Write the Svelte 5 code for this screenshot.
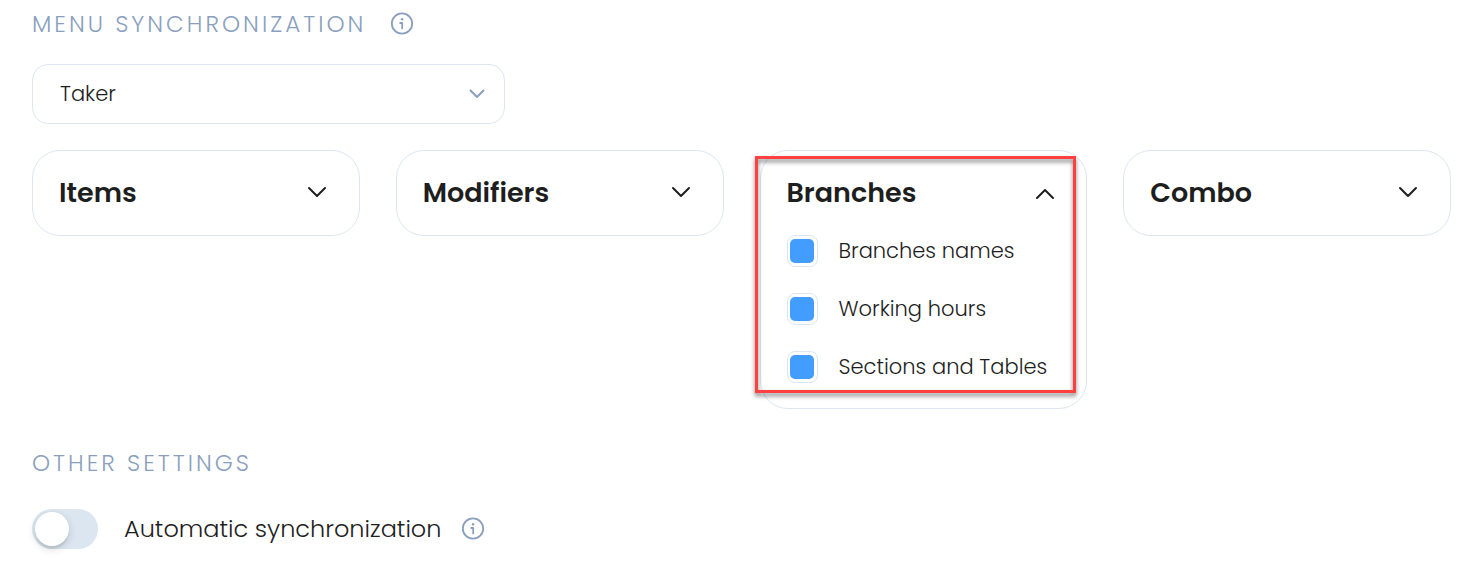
<script>
  let source = $state('Taker');
  let automatic = $state(false);
  let groups = $state([
    { name: 'Items', open: false, options: [] },
    { name: 'Modifiers', open: false, options: [] },
    {
      name: 'Branches',
      open: true,
      marked: true,
      options: [
        { label: 'Branches names', checked: true },
        { label: 'Working hours', checked: true },
        { label: 'Sections and Tables', checked: true }
      ]
    },
    { name: 'Combo', open: false, options: [] }
  ]);
</script>

{#snippet info(label)}
  <button class="info" type="button" aria-label={label}>
    <svg viewBox="0 0 24 24" width="24" height="24" fill="none" stroke="currentColor" stroke-width="1.8" stroke-linecap="round" stroke-linejoin="round">
      <circle cx="12" cy="11.5" r="10.2" />
      <path d="M10.2 11H12.2V16.4" />
      <circle cx="12.1" cy="7.2" r="1.2" fill="currentColor" stroke="none" />
    </svg>
  </button>
{/snippet}

<main>
  <section>
    <header>
      <h2>MENU SYNCHRONIZATION</h2>
      {@render info('About menu synchronization')}
    </header>

    <div class="picker">
      <select aria-label="Menu source" bind:value={source}>
        <option>Taker</option>
      </select>
      <svg viewBox="0 0 16 10" width="16" height="10" fill="none" stroke="currentColor" stroke-width="2" stroke-linecap="round" stroke-linejoin="round">
        <path d="M1.5 1.5 8 8l6.5-6.5" />
      </svg>
    </div>

    <div class="groups">
      {#each groups as group}
        <article class="card" class:open={group.open}>
          <button class="toggle" type="button" aria-expanded={group.open} onclick={() => (group.open = !group.open)}>
            <span>{group.name}</span>
            <svg viewBox="0 0 20 14" width="20" height="14" fill="none" stroke="currentColor" stroke-width="2" stroke-linecap="round" stroke-linejoin="round">
              <path d="M2 2l8 8 8-8" />
            </svg>
          </button>
          {#if group.open && group.options.length}
            <ul>
              {#each group.options as option}
                <li>
                  <label>
                    <input type="checkbox" bind:checked={option.checked} />
                    <span>{option.label}</span>
                  </label>
                </li>
              {/each}
            </ul>
          {/if}
          {#if group.marked}
            <div class="marker"></div>
          {/if}
        </article>
      {/each}
    </div>
  </section>

  <section>
    <header>
      <h2>OTHER SETTINGS</h2>
    </header>
    <div class="setting">
      <label>
        <input class="switch" type="checkbox" role="switch" bind:checked={automatic} />
        <span>Automatic synchronization</span>
      </label>
      {@render info('About automatic synchronization')}
    </div>
  </section>
</main>

<style>
  :global(body) {
    background: #fff;
  }
  main {
    box-sizing: border-box;
    padding: 8px 33px 16px 32px;
    display: flex;
    flex-direction: column;
    gap: 38px;
    color: #1e1e1e;
    font-family: Poppins, Inter, sans-serif;
    font-weight: 300;
    font-size: 21px;
    line-height: 30px;
  }
  header,
  .setting {
    display: flex;
    align-items: center;
    gap: 20px;
  }
  header {
    gap: 24px;
  }
  h2 {
    margin: 0;
    color: #8a9fbe;
    font-size: 23px;
    line-height: 32px;
    font-weight: 300;
    letter-spacing: 3px;
  }
  button {
    padding: 0;
    border: 0;
    background: none;
    color: inherit;
    font: inherit;
    cursor: pointer;
  }
  svg {
    display: block;
  }
  .info {
    color: #8a9fbe;
  }
  .picker {
    position: relative;
    max-width: 473px;
    margin-top: 24px;
  }
  select {
    display: block;
    appearance: none;
    box-sizing: border-box;
    width: 100%;
    height: 60px;
    padding: 0 56px 0 27px;
    border: 1px solid #dbe6f2;
    border-radius: 16px;
    background: #fff;
    color: inherit;
    font: inherit;
  }
  .picker svg {
    position: absolute;
    right: 20px;
    top: 25px;
    color: #8a9fbe;
    pointer-events: none;
  }
  .groups {
    display: grid;
    grid-template-columns: repeat(4, 1fr);
    gap: 36px;
    align-items: start;
    margin-top: 26px;
  }
  .card {
    position: relative;
    border: 1px solid #dbe6f2;
    border-radius: 28px;
  }
  .toggle {
    display: flex;
    align-items: center;
    justify-content: space-between;
    width: 100%;
    height: 84px;
    padding: 0 32px 0 26px;
    font-size: 27px;
    font-weight: 600;
  }
  .open .toggle {
    padding-right: 31px;
  }
  .open .toggle svg {
    transform: rotate(180deg);
  }
  ul {
    display: flex;
    flex-direction: column;
    gap: 26px;
    margin: 0;
    padding: 0 26px 25px;
    list-style: none;
  }
  label {
    display: flex;
    align-items: center;
    cursor: pointer;
  }
  li label {
    align-items: flex-start;
    gap: 21px;
    height: 32px;
    line-height: 32px;
    white-space: nowrap;
  }
  input {
    appearance: none;
    flex: none;
    margin: 0;
    cursor: pointer;
  }
  li input {
    box-sizing: border-box;
    width: 31px;
    height: 32px;
    padding: 3px 2px;
    border: 1px solid #dbe6f2;
    border-radius: 8px;
  }
  li input:checked::before {
    content: '';
    display: block;
    width: 24px;
    height: 24px;
    border-radius: 5px;
    background: #429dff;
  }
  .marker {
    position: absolute;
    inset: 5px 10px 15px -6px;
    border: 3px solid #ff4040;
    filter: drop-shadow(0 3px 2px rgba(0, 0, 0, 0.5));
    pointer-events: none;
  }
  .setting {
    margin-top: 30px;
    font-size: 24px;
  }
  .setting label {
    gap: 26px;
  }
  .switch {
    box-sizing: border-box;
    width: 66px;
    height: 40px;
    padding: 3px;
    border-radius: 20px;
    background: #dbe6f1;
  }
  .switch::before {
    content: '';
    display: block;
    width: 34px;
    height: 34px;
    border-radius: 50%;
    background: #fff;
    box-shadow: 0 3px 8px rgba(0, 0, 0, 0.15), 0 3px 1px rgba(0, 0, 0, 0.06);
  }
  .switch:checked {
    background: #429dff;
  }
  .switch:checked::before {
    margin-left: 26px;
  }
</style>
